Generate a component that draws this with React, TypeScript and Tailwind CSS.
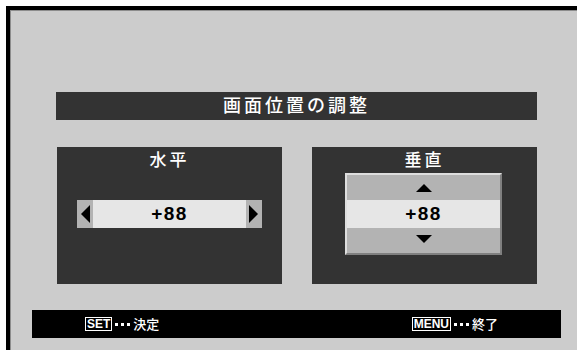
const font = { fontFamily: '"Liberation Sans", "Noto Sans CJK JP", sans-serif' };

const ArrowBox = ({ dir }: { dir: "left" | "right" }) => (
  <div className="flex h-full w-[16px] items-center justify-center bg-[#b3b3b3]">
    <svg width="10" height="18" viewBox="0 0 10 18">
      {dir === "left" ? (
        <polygon points="10,0 10,18 1,9" fill="#000" />
      ) : (
        <polygon points="0,0 0,18 9,9" fill="#000" />
      )}
    </svg>
  </div>
);

const Key = ({ label, text }: { label: string; text: string }) => (
  <div className="flex items-center text-white">
    <span className="flex h-[14px] items-center border border-white px-[1px] text-[12px] font-bold leading-none">
      {label}
    </span>
    <span className="mx-[3px] flex gap-[3px]">
      <span className="h-[3px] w-[3px] bg-white" />
      <span className="h-[3px] w-[3px] bg-white" />
      <span className="h-[3px] w-[3px] bg-white" />
    </span>
    <span className="text-[13px] font-medium leading-none">{text}</span>
  </div>
);

export default function App() {
  return (
    <div className="h-[350px] w-[577px] overflow-hidden bg-white pl-[6px] pt-[6px]" style={font}>
      <div className="h-[344px] w-[571px] border-l-4 border-t-4 border-black">
        <div className="h-full w-full border-l border-t border-[#8c8c8c] bg-[#cccccc] pt-[81px]">
          <div className="ml-[45px] flex h-[28px] w-[481px] items-center justify-center bg-[#333333] text-[18px] font-medium tracking-[3px] text-white">
            画面位置の調整
          </div>

          <div className="ml-[46px] mt-[27px] flex gap-[30px]">
            <div className="h-[137px] w-[225px] bg-[#333333]">
              <div className="pt-[2px] text-center text-[17px] font-medium leading-[24px] tracking-[3px] text-white">
                水平
              </div>
              <div className="ml-[20px] mt-[27px] flex h-[28px] w-[185px]">
                <ArrowBox dir="left" />
                <div className="flex flex-1 items-center justify-center bg-[#e6e6e6] text-[19px] font-bold tracking-[1.5px] text-black">
                  +88
                </div>
                <ArrowBox dir="right" />
              </div>
            </div>

            <div className="h-[137px] w-[225px] bg-[#333333]">
              <div className="pt-[2px] text-center text-[17px] font-medium leading-[24px] tracking-[3px] text-white">
                垂直
              </div>
              <div className="ml-[33px] w-[157px] border-2 border-b-[#808080] border-l-[#dedede] border-r-[#808080] border-t-[#dedede] bg-[#b3b3b3]">
                <div className="flex h-[25px] items-center justify-center">
                  <svg width="16" height="8" viewBox="0 0 16 8">
                    <polygon points="8,0 16,8 0,8" fill="#000" />
                  </svg>
                </div>
                <div className="flex h-[28px] items-center justify-center bg-[#e6e6e6] text-[19px] font-bold tracking-[1.5px] text-black">
                  +88
                </div>
                <div className="flex h-[25px] items-start justify-center pt-[7px]">
                  <svg width="16" height="8" viewBox="0 0 16 8">
                    <polygon points="0,0 16,0 8,8" fill="#000" />
                  </svg>
                </div>
              </div>
            </div>
          </div>

          <div className="ml-[21px] mt-[26px] flex h-[28px] w-[529px] items-center justify-between bg-black pl-[53px] pr-[63px]">
            <Key label="SET" text="決定" />
            <Key label="MENU" text="終了" />
          </div>
        </div>
      </div>
    </div>
  );
}
